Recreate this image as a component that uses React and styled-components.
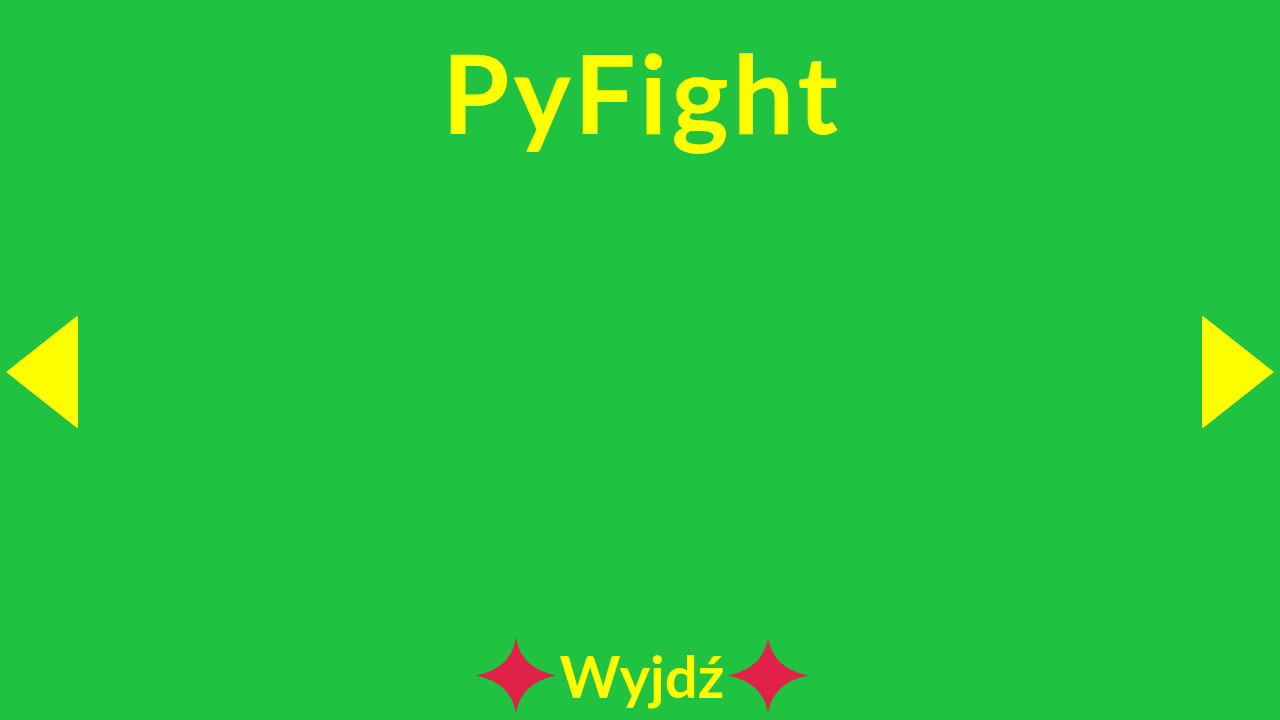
import styled, { createGlobalStyle } from "styled-components";

const GlobalStyle = createGlobalStyle`
  html, body {
    margin: 0;
    padding: 0;
    background: #20c241;
  }
`;

const Screen = styled.div`
  width: 1280px;
  height: 720px;
  background: #20c241;
  display: flex;
  flex-direction: column;
  align-items: stretch;
  font-family: Lato, "Open Sans", sans-serif;
  overflow: hidden;
`;

const Title = styled.h1`
  margin: 0;
  padding-top: 37px;
  padding-left: 4px;
  text-align: center;
  color: #ffff00;
  font-size: 109px;
  font-weight: 700;
  letter-spacing: 4px;
  line-height: 1;
`;

const Middle = styled.div`
  flex: 1;
  display: flex;
  align-items: center;
  justify-content: space-between;
  padding: 0 6px 40px 6px;
`;

const Arrow = styled.svg`
  width: 72px;
  height: 112px;
  display: block;
`;

const Footer = styled.div`
  display: flex;
  align-items: center;
  justify-content: center;
  gap: 4px;
  padding-bottom: 6px;
  padding-left: 4px;
`;

const ExitLabel = styled.span`
  color: #ffff00;
  font-size: 58px;
  font-weight: 700;
  line-height: 1;
`;

const Star = () => (
  <svg width="80" height="77" viewBox="0 0 80 77">
    <path
      d="M40 0 Q44 31 80 38.5 Q44 46 40 77 Q36 46 0 38.5 Q36 31 40 0Z"
      fill="#e22148"
    />
  </svg>
);

export default function App() {
  return (
    <Screen>
      <GlobalStyle />
      <Title>PyFight</Title>
      <Middle>
        <Arrow viewBox="0 0 72 112">
          <polygon points="71,0 72,1 72,111 71,112 0,56" fill="#ffff00" />
        </Arrow>
        <Arrow viewBox="0 0 72 112">
          <polygon points="1,0 0,1 0,111 1,112 72,56" fill="#ffff00" />
        </Arrow>
      </Middle>
      <Footer>
        <Star />
        <ExitLabel>Wyjdź</ExitLabel>
        <Star />
      </Footer>
    </Screen>
  );
}
